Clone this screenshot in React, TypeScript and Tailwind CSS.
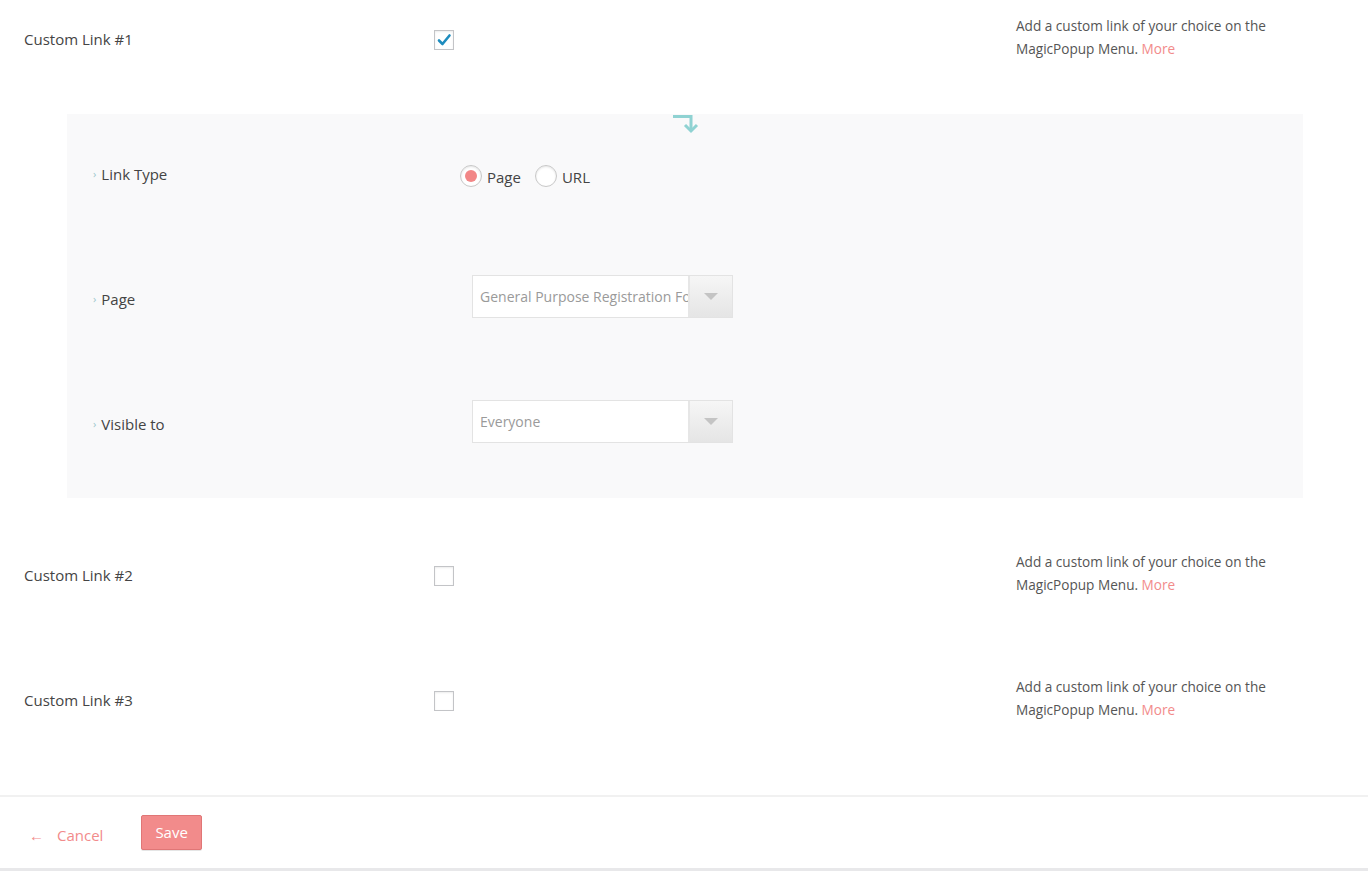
import { useState } from 'react';

const font = { fontFamily: '"Open Sans", "Noto Sans", sans-serif' };

function Checkbox({ checked }: { checked: boolean }) {
  return (
    <div className="w-[20px] h-[20px] border border-[#c3c4c7] bg-white shadow-[inset_0_1px_2px_rgba(0,0,0,0.08)] flex items-center justify-center">
      {checked && (
        <svg width="16" height="16" viewBox="0 0 16 16">
          <path d="M3 8.5 L6.5 12 L13.5 3.5" fill="none" stroke="#1e8cbe" strokeWidth="2.6" strokeLinecap="round" strokeLinejoin="round" />
        </svg>
      )}
    </div>
  );
}

function Description() {
  return (
    <p className="w-[280px] text-[13.6px] leading-[23px] text-[#555]">
      Add a custom link of your choice on the
      <br />
      MagicPopup Menu. <a className="text-[#f28b8b] cursor-pointer">More</a>
    </p>
  );
}

function LinkRow({ n, checked }: { n: number; checked: boolean }) {
  return (
    <div className="flex items-start h-[114px] pt-[14px]">
      <div className="w-[434px] pl-[24px] mt-[14px] text-[15px] leading-[23px] text-[#444]">Custom Link #{n}</div>
      <div className="w-[582px] mt-[16px]">
        <Checkbox checked={checked} />
      </div>
      <Description />
    </div>
  );
}

function Radio({ checked, label, onClick }: { checked: boolean; label: string; onClick: () => void }) {
  return (
    <label className="flex items-center cursor-pointer" onClick={onClick}>
      <span className="w-[22px] h-[22px] rounded-full border border-[#c8c8c8] bg-white shadow-[inset_0_1px_2px_rgba(0,0,0,0.1)] flex items-center justify-center">
        {checked && <span className="w-[12px] h-[12px] rounded-full bg-[#f28787]" />}
      </span>
      <span className="ml-[5px] text-[15px] text-[#444] mt-[3px]">{label}</span>
    </label>
  );
}

function Select({ value }: { value: string }) {
  return (
    <div className="flex w-[261px] h-[43px] border border-[#e3e3e3] bg-white">
      <div className="flex-1 min-w-0 overflow-hidden whitespace-nowrap pl-[7px] flex items-center text-[14px] text-[#9a9a9a]">
        {value}
      </div>
      <div className="w-[44px] h-full border-l-2 border-[#e6e6e6] bg-gradient-to-b from-[#f6f6f6] to-[#e5e5e5] flex items-center justify-center">
        <svg width="14" height="7" viewBox="0 0 14 7">
          <path d="M0 0 L14 0 L7 7 Z" fill="#c4c4c4" />
        </svg>
      </div>
    </div>
  );
}

function PanelLabel({ children, offset }: { children: string; offset?: boolean }) {
  return (
    <div className={`w-[367px] pl-[26px] flex items-center text-[15px] text-[#444] ${offset ? 'mt-[5px]' : ''}`}>
      <span className="text-[#9bc7cb] text-[11px] mr-[5px]">›</span>
      {children}
    </div>
  );
}

export default function App() {
  const [linkType, setLinkType] = useState<'page' | 'url'>('page');

  return (
    <div className="w-[1368px] h-[871px] bg-white overflow-hidden flex flex-col" style={font}>
      <LinkRow n={1} checked />

      <div className="relative mx-[67px] w-[1236px] h-[384px] shrink-0 bg-[#f9f9fa] pb-[14px]">
        <svg className="absolute left-[605px] top-[-2px]" width="28" height="22" viewBox="0 0 28 22">
          <path d="M1 4.5 H19 V19" fill="none" stroke="#8fd2d2" strokeWidth="3" />
          <path d="M13 13 L19 19 L25 13" fill="none" stroke="#8fd2d2" strokeWidth="3" />
        </svg>

        <div className="flex items-center h-[120px]">
          <PanelLabel>Link Type</PanelLabel>
          <div className="flex items-center gap-[14px] ml-[26px] mt-[4px]">
            <Radio checked={linkType === 'page'} label="Page" onClick={() => setLinkType('page')} />
            <Radio checked={linkType === 'url'} label="URL" onClick={() => setLinkType('url')} />
          </div>
        </div>

        <div className="flex items-center h-[125px]">
          <PanelLabel offset>Page</PanelLabel>
          <div className="ml-[38px]">
            <Select value="General Purpose Registration Form" />
          </div>
        </div>

        <div className="flex items-center h-[125px]">
          <PanelLabel offset>Visible to</PanelLabel>
          <div className="ml-[38px]">
            <Select value="Everyone" />
          </div>
        </div>
      </div>

      <div className="mt-[38px]">
        <LinkRow n={2} checked={false} />
      </div>
      <div className="mt-[11px]">
        <LinkRow n={3} checked={false} />
      </div>

      <div className="mt-[20px] shrink-0 border-t-2 border-[#f1f1f1] h-[76px] flex items-center pl-[29px] border-b-[3px] border-b-[#e8e8ea]">
        <a className="flex items-center text-[15px] text-[#f28b8b] mt-[5px] cursor-pointer">
          <span className="mr-[13px]">←</span>
          Cancel
        </a>
        <button className="ml-[38px] h-[35px] px-[13px] bg-[#f28b8b] border border-[#e07676] rounded-[2px] text-white text-[15px] shadow-[0_1px_0_rgba(0,0,0,0.1)]">
          Save
        </button>
      </div>
    </div>
  );
}
